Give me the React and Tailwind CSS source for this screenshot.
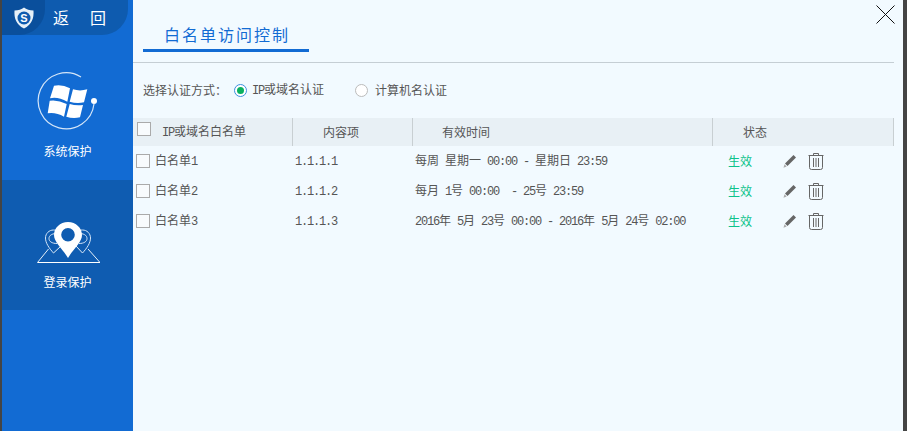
import React from 'react';

const rows = [
  { name: '白名单1', ip: '1.1.1.1', time: '每周 星期一 00:00 - 星期日 23:59' },
  { name: '白名单2', ip: '1.1.1.2', time: '每月 1号 00:00  - 25号 23:59' },
  { name: '白名单3', ip: '1.1.1.3', time: '2016年 5月 23号 00:00 - 2016年 5月 24号 02:00' },
];

// latin runs sit in half-width cells next to the 12px CJK text
function Mix({ text }) {
  return (
    <span className="whitespace-pre">
      {text.split(/([\x00-\x7f]+)/).map((part, i) =>
        /^[\x00-\x7f]+$/.test(part) ? (
          <span key={i} className="font-['Liberation_Mono',monospace] tracking-[-1.2px]">{part}</span>
        ) : (
          <span key={i}>{part}</span>
        )
      )}
    </span>
  );
}

function ShieldLogo() {
  return (
    <svg width="20" height="22" viewBox="0 0 20 22">
      <path d="M10 0.500 C12.500 2.500 15.500 3.500 19.500 3.500 C20 11 18 17.500 10 21.500 C2 17.500 0 11 0.500 3.500 C4.500 3.500 7.500 2.500 10 0.500 Z" fill="#e6f0f8" />
      <circle cx="10" cy="11" r="6.500" fill="#0e5baf" />
      <text x="10" y="15" textAnchor="middle" fontSize="11" fontWeight="700" fontFamily="Liberation Sans, sans-serif" fill="#fff">S</text>
    </svg>
  );
}

function WindowsIcon() {
  return (
    <svg width="62" height="60" viewBox="0 0 62 60" fill="none">
      <path d="M45 6 A28 28 0 1 0 58 33" stroke="#d5e6f8" strokeWidth="1.2" />
      <circle cx="58" cy="30" r="3" fill="#fff" />
      <path d="M18 14.700 Q26 13 34 17.300 L31.300 30.700 Q22 25.500 14 27.300 Z" fill="#fff" />
      <path d="M37 18.300 Q44 20.500 51.300 18.300 L48 31.300 Q41 33 33.700 30.700 Z" fill="#fff" />
      <path d="M13.700 29.700 Q22 28.500 30.700 33 L28 45.700 Q20 41 11.700 42.300 Z" fill="#fff" />
      <path d="M33.700 33 Q40 35 47 34 L44 46.300 Q37 48 30.300 45.700 Z" fill="#fff" />
    </svg>
  );
}

function PinIcon() {
  return (
    <svg width="64" height="44" viewBox="0 0 64 44" fill="none">
      <path d="M1.500 41.500 H64" stroke="#fff" strokeWidth="1" />
      <path d="M1.500 41.500 L12.500 28 M17.500 32 L25 25 M40 25 L46.500 32 M52 28 L64 41.500" stroke="#e6f0f8" strokeWidth="1" />
      <path d="M17.500 32 C13 27 9.500 22 9.500 17 C9.500 12.500 13 9 17.500 9 C19.500 9 21.500 9.500 23 11" stroke="#d5e6f8" strokeWidth="1" />
      <path d="M46.500 32 C51 27 54.500 22 54.500 17 C54.500 12.500 51 9 46.500 9 C44.500 9 42.500 9.500 41 11" stroke="#d5e6f8" strokeWidth="1" />
      <path d="M23 12.500 C16 12 13 14.500 13 17.500 C13 20.500 16 22.500 21 22.500 M41 12.500 C48 12 51 14.500 51 17.500 C51 20.500 48 22.500 43 22.500" stroke="#d5e6f8" strokeWidth="1" />
      <path fillRule="evenodd" clipRule="evenodd" fill="#fff" d="M32 1 C40 1 46 7 46 14 C46 21 38 27 32 37 C26 27 18 21 18 14 C18 7 24 1 32 1 Z M32 7 A6.800 6.800 0 1 0 32 20.600 A6.800 6.800 0 1 0 32 7 Z" />
    </svg>
  );
}

function Pencil() {
  return (
    <svg width="15" height="15" viewBox="0 0 15 15" className="block">
      <path d="M10.500 1 L13 3.500 L4.500 12 L2 9.500 Z" fill="#666" />
      <path d="M1.500 10.300 L3.700 12.500 L0.500 13.800 Z" fill="#aaa" />
    </svg>
  );
}

function Trash() {
  return (
    <svg width="16" height="17" viewBox="0 0 16 17" fill="none" stroke="#666" strokeWidth="1" className="block">
      <path d="M0.500 2.500 H15.500 M5.500 2.500 V0.500 H10.500 V2.500" />
      <path d="M1.500 2.500 V14.500 Q1.500 16.500 3.500 16.500 H12.500 Q14.500 16.500 14.500 14.500 V2.500" />
      <path d="M5.500 5 V14 M8 5 V14 M10.500 5 V14" />
    </svg>
  );
}

export default function App() {
  return (
    <div className="w-[907px] h-[431px] flex overflow-hidden bg-[#444] font-['Noto_Sans_CJK_SC',sans-serif] text-[12px] text-[#555]">
      <aside className="w-[131px] ml-[2px] shrink-0 bg-[#126bd3] flex flex-col text-white">
        <div className="w-[126px] h-[35px] flex items-center bg-[#0e5baf] rounded-br-[26px]">
          <div className="w-[43px] h-[35px] shrink-0 flex items-center justify-center pl-[1px] bg-[#0a4f9c] rounded-br-[26px]">
            <ShieldLogo />
          </div>
          <span className="ml-[8px] -mt-[2px] text-[16px] leading-none">返</span>
          <span className="ml-[21px] -mt-[2px] text-[16px] leading-none">回</span>
        </div>
        <div className="h-[145px] flex flex-col items-center">
          <div className="mt-[36px] -ml-[1px]"><WindowsIcon /></div>
          <span className="mt-[12px] leading-[16px]">系统保护</span>
        </div>
        <div className="h-[130px] bg-[#0f5cb1] flex flex-col items-center">
          <div className="mt-[41px]"><PinIcon /></div>
          <span className="mt-[9px] leading-[16px]">登录保护</span>
        </div>
      </aside>

      <main className="w-[770px] shrink-0 bg-[#f2faff] flex flex-col">
        <div className="h-[63px] flex justify-between mr-[9px] border-b border-[#c5ced4]">
          <div className="ml-[10px] w-[166px] h-[52px] border-b-[3px] border-[#126bd3] pl-[21px] pt-[22px] text-[16px] leading-[24px] tracking-[2px] text-[#126bd3]">
            白名单访问控制
          </div>
          <button className="mt-[5px] -mr-[1px] w-[19px] h-[19px] self-start">
            <svg width="19" height="19" viewBox="0 0 19 19" stroke="#111" strokeWidth="1" className="block">
              <path d="M0.500 0.500 L18.500 18.500 M18.500 0.500 L0.500 18.500" />
            </svg>
          </button>
        </div>

        <div className="ml-[10px] mt-[18px] h-[18px] flex items-center">
          <span>选择认证方式：</span>
          <span className="ml-[7px] w-[13px] h-[13px] rounded-full border border-[#3c8fe0] bg-white flex items-center justify-center">
            <span className="w-[7px] h-[7px] rounded-full bg-[#0ab060]"></span>
          </span>
          <span className="ml-[5px]"><Mix text="IP或域名认证" /></span>
          <span className="ml-[31px] w-[13px] h-[13px] rounded-full border border-[#bbb] bg-white"></span>
          <span className="ml-[7px]">计算机名认证</span>
        </div>

        <div className="mt-[19px] mr-[9px] h-[28px] bg-[#e8f0f5] grid grid-cols-[160px_120px_300px_181px]">
          <div className="flex items-center border-r border-[#c8cfd2]">
            <span className="w-[14px] h-[14px] ml-[4px] -mt-[7px] border border-[#aaa] bg-[#f8fbfd]"></span>
            <span className="ml-[11px]"><Mix text="IP或域名白名单" /></span>
          </div>
          <div className="flex items-center border-r border-[#c8cfd2] pl-[30px]">内容项</div>
          <div className="flex items-center border-r border-[#c8cfd2] pl-[29px]">有效时间</div>
          <div className="flex items-center border-r border-[#c8cfd2] pl-[30px]">状态</div>
        </div>

        <div className="flex flex-col">
          {rows.map((row) => (
            <div key={row.name} className="h-[30px] grid grid-cols-[160px_120px_300px_181px] items-center">
              <div className="flex items-center pl-[3px]">
                <span className="w-[14px] h-[14px] border border-[#aaa] bg-[#f8fbfd]"></span>
                <span className="ml-[5px]"><Mix text={row.name} /></span>
              </div>
              <div className="pl-[2px]"><Mix text={row.ip} /></div>
              <div className="pl-[2px]"><Mix text={row.time} /></div>
              <div className="flex items-center pl-[15px]">
                <span className="text-[#0cc28a]">生效</span>
                <span className="ml-[31px]"><Pencil /></span>
                <span className="ml-[10px]"><Trash /></span>
              </div>
            </div>
          ))}
        </div>
      </main>

      <div className="flex-1 bg-[#444]"></div>
    </div>
  );
}
